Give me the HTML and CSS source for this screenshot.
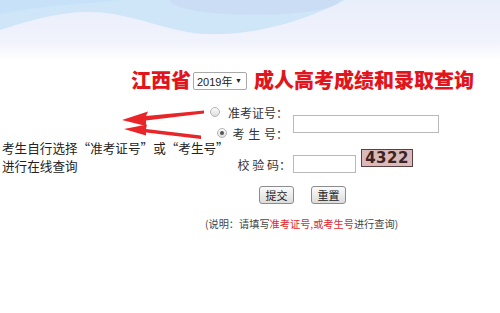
FILE: index.html
```html
<!DOCTYPE html>
<html lang="zh-CN">
<head>
<meta charset="utf-8">
<title>江西省成人高考成绩和录取查询</title>
<link rel="stylesheet" href="styles.css">
</head>
<body>
<div class="page">
  <svg class="sky" width="500" height="60" viewBox="0 0 500 60" aria-hidden="true">
    <defs>
      <linearGradient id="fade" x1="0" y1="0" x2="0" y2="1">
        <stop offset="0" stop-color="#e9eefb"/>
        <stop offset="0.7" stop-color="#f1f3fc"/>
        <stop offset="1" stop-color="#ffffff"/>
      </linearGradient>
    </defs>
    <rect x="0" y="0" width="500" height="60" fill="url(#fade)"/>
    <path d="M0,0 H345 C310,18 260,36 205,34 C165,32 130,11 85,12 C50,13 20,24 0,30 Z" fill="#cfe5f8"/>
    <ellipse cx="255" cy="0" rx="85" ry="15" fill="#c9dbf2" opacity="0.8"/>
    <path d="M0,0 H120 C80,4 40,6 0,14 Z" fill="#c3e1f8" opacity="0.7"/>
  </svg>

  <h1 class="title">
    <span class="title-text">江西省</span>
    <span class="select"><span class="select-value">2019年</span><span class="caret">▼</span></span>
    <span class="title-text">成人高考成绩和录取查询</span>
  </h1>

  <form class="form">
    <label class="choice choice-first"><span class="radio"></span><span class="label-text">准考证号：</span></label>
    <input class="field field-long" type="text">
    <label class="choice choice-second"><span class="radio radio-checked"></span><span class="label-text label-spaced">考 生 号：</span></label>
    <span class="label-text label-code">校 验 码：</span>
    <div class="code-cell">
      <input class="field field-short" type="text">
      <span class="captcha">4322</span>
    </div>
  </form>

  <div class="actions">
    <button class="btn" type="button">提交</button>
    <button class="btn" type="button">重置</button>
  </div>

  <p class="note">(说明：请填写<span class="note-red">准考证号,或考生号</span>进行查询)</p>

  <div class="annotation">
    <span class="annotation-line">考生自行选择“准考证号”或“考生号”</span>
    <span class="annotation-line">进行在线查询</span>
  </div>

  <svg class="arrows" width="100" height="36" viewBox="0 0 100 36" aria-hidden="true">
    <polygon points="84,5.5 26,11 28,6.5 2,15 26,21 26,15.5 84,8.5" fill="#e8262a"/>
    <polygon points="81,30.5 26,24 27,19.5 4,24 26,30.5 26,27.5 81,34" fill="#e8262a"/>
  </svg>
</div>
</body>
</html>
```

FILE: styles.css
```css
* { box-sizing: border-box; }

html, body {
  margin: 0;
  padding: 0;
  background: #ffffff;
}

.page {
  position: relative;
  width: 500px;
  height: 313px;
  overflow: hidden;
  display: flex;
  flex-direction: column;
  font-family: "Noto Sans CJK SC", "Noto Sans", sans-serif;
  color: #333;
}

.sky {
  position: absolute;
  left: 0;
  top: 0;
}

.title {
  position: relative;
  margin: 0;
  padding: 67px 0 0 131px;
  display: flex;
  align-items: center;
  height: 92px;
  font-weight: 900;
}

.title-text {
  font-size: 20px;
  line-height: 25px;
  color: #e2151d;
}

.select {
  display: inline-flex;
  align-items: center;
  justify-content: space-between;
  width: 54px;
  height: 18px;
  margin: 2px 7px 0 2px;
  padding: 0 4px 0 3px;
  border: 1px solid #a9a9a9;
  border-radius: 2px;
  background: #fff;
  font-family: "Liberation Sans", "Noto Sans CJK SC", sans-serif;
  font-weight: 400;
  font-size: 11px;
  color: #222;
}

.caret {
  font-size: 7px;
  color: #222;
}

.form {
  position: relative;
  margin: 10px 0 0 195px;
  display: grid;
  grid-template-columns: 93px 146px;
  grid-template-rows: 20px 20px 26px;
  column-gap: 5px;
  row-gap: 1px;
}

.choice {
  display: flex;
  align-items: center;
  justify-content: flex-end;
  grid-column: 1;
}

.choice-first { grid-row: 1; }
.choice-second { grid-row: 2; }

.label-text {
  font-size: 12px;
  color: #333;
  white-space: pre;
}

.label-spaced { word-spacing: 1px; }

.radio {
  width: 10px;
  height: 10px;
  border-radius: 50%;
  border: 1px solid #b5b5b5;
  background: linear-gradient(#fbfbfb, #dedede);
  display: inline-flex;
  align-items: center;
  justify-content: center;
  margin-right: 8px;
}

.choice-second .radio { margin-right: 6px; }

.radio-checked::after {
  content: "";
  width: 4px;
  height: 4px;
  border-radius: 50%;
  background: #555;
}

.field {
  height: 18px;
  border: 1px solid #b9b9b9;
  background: #fff;
  padding: 0;
  margin: 0;
}

.field-long {
  grid-column: 2;
  grid-row: 1 / span 2;
  align-self: center;
  width: 146px;
  margin-top: 2px;
}

.label-code {
  grid-column: 1;
  grid-row: 3;
  align-self: end;
  justify-self: end;
  margin-right: -3px;
  margin-bottom: -3px;
}

.code-cell {
  grid-column: 2;
  grid-row: 3;
  margin-top: 5px;
  display: flex;
  align-items: flex-start;
  gap: 5px;
}

.field-short {
  width: 63px;
  margin-top: 6px;
}

.captcha {
  width: 52px;
  height: 18px;
  border: 1px solid #5a4040;
  background: #d9b9b9;
  color: #3e2323;
  font-family: "DejaVu Sans", sans-serif;
  font-weight: 700;
  font-size: 15px;
  line-height: 16px;
  text-align: center;
  letter-spacing: 0.5px;
}

.actions {
  display: flex;
  gap: 17px;
  margin: 16px 0 0 259px;
}

.btn {
  width: 35px;
  height: 18px;
  padding: 0;
  border: 1px solid #8c8c8c;
  border-radius: 3px;
  background: linear-gradient(#fbfbfb, #dcdcdc);
  font-family: "Noto Sans CJK SC", sans-serif;
  font-size: 11px;
  line-height: 16px;
  color: #222;
}

.note {
  margin: 13px 0 0 205px;
  font-size: 10.2px;
  line-height: 14px;
  color: #444;
}

.note-red { color: #e3262b; }

.annotation {
  position: absolute;
  left: 2px;
  top: 140px;
  display: flex;
  flex-direction: column;
  gap: 1px;
  font-size: 12.6px;
  line-height: 16.5px;
  color: #222;
}

.annotation-line {
  display: block;
  white-space: nowrap;
}

.arrows {
  position: absolute;
  left: 120px;
  top: 105px;
}
```
